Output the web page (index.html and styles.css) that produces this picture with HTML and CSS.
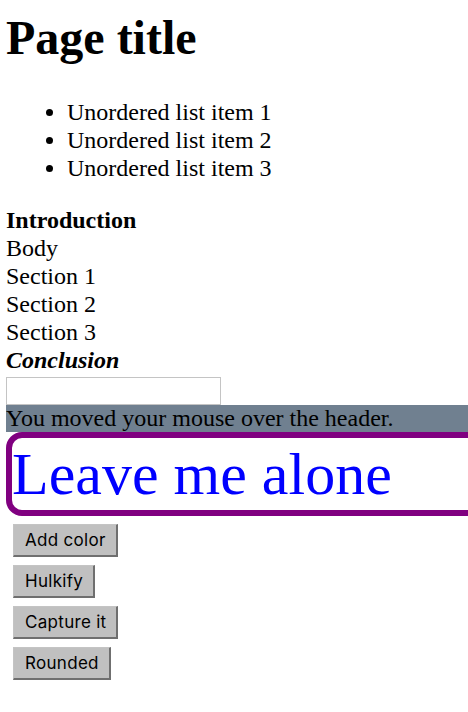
FILE: index.html
```html
<!DOCTYPE html>
<html lang="en">
<head>
<meta charset="utf-8">
<title>Page title</title>
<link rel="stylesheet" href="styles.css">
</head>
<body>
<h1 class="title">Page title</h1>
<ul class="list">
  <li>Unordered list item 1</li>
  <li>Unordered list item 2</li>
  <li>Unordered list item 3</li>
</ul>
<header class="intro">Introduction</header>
<main>
  <div class="line">Body</div>
  <section class="line">Section 1</section>
  <section class="line">Section 2</section>
  <section class="line">Section 3</section>
</main>
<footer class="conclusion">Conclusion</footer>
<input class="field" type="text">
<div class="notice">You moved your mouse over the header.</div>
<div class="alone">Leave me alone</div>
<div class="buttons">
  <button class="btn">Add color</button>
  <button class="btn">Hulkify</button>
  <button class="btn">Capture it</button>
  <button class="btn">Rounded</button>
</div>
</body>
</html>
```
FILE: styles.css
```css
html {
  overflow: hidden;
}
body {
  margin: 10px 0 0 6px;
  font-family: "Liberation Serif", "Times New Roman", serif;
  font-size: 24px;
  line-height: 28px;
  color: #000;
  background: #fff;
}
.title {
  margin: 0 0 33px;
  font-size: 48px;
  line-height: 55px;
  font-weight: bold;
}
.list {
  margin: 0 0 24px;
  padding-left: 61px;
}
.intro {
  font-weight: bold;
}
.conclusion {
  font-weight: bold;
  font-style: italic;
}
.field {
  display: block;
  box-sizing: border-box;
  width: 215px;
  height: 28px;
  margin: 3px 0 0;
  padding: 0 4px;
  border: 1px solid #c4c4c4;
  font-size: 16px;
  background: #fff;
}
.notice {
  background: #708090;
  line-height: 27px;
}
.alone {
  box-sizing: border-box;
  width: 540px;
  height: 84px;
  border: 6px solid #800080;
  border-radius: 16px;
  color: #0000ff;
  font-size: 60px;
  line-height: 72px;
}
.buttons {
  display: flex;
  flex-direction: column;
  align-items: flex-start;
  gap: 8px;
  margin: 8px 0 0 7px;
}
.btn {
  box-sizing: border-box;
  height: 33px;
  padding: 0 10px 0 11px;
  font-family: Inter, "Liberation Sans", sans-serif;
  font-size: 17px;
  letter-spacing: 0.3px;
  color: #000;
  background: #c0c0c0;
  border-style: solid;
  border-width: 1px 2px 2px 1px;
  border-color: #c4c4c4 #6f6f6f #6f6f6f #c4c4c4;
  border-radius: 0;
}
```
